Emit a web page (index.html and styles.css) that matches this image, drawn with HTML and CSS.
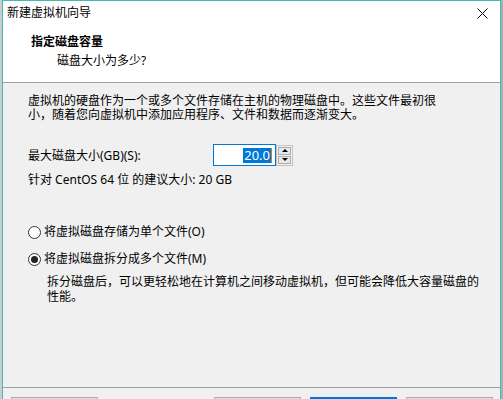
FILE: index.html
```html
<!DOCTYPE html>
<html lang="zh-CN">
<head>
    <meta charset="UTF-8">
    <title>新建虚拟机向导</title>
    <link rel="stylesheet" href="styles.css">
</head>
<body>
    <div class="desktop">
        <div class="edge-left"></div>
        <div class="window">
            <div class="titlebar">
                <span class="title">新建虚拟机向导</span>
                <span class="close">
                    <svg width="11" height="11" viewBox="0 0 11 11">
                        <path d="M0.5 0.5 L10.5 10.5 M10.5 0.5 L0.5 10.5" stroke="#000" stroke-width="1" fill="none"/>
                    </svg>
                </span>
            </div>

            <div class="header">
                <div class="header-title">指定磁盘容量</div>
                <div class="header-sub">磁盘大小为多少?</div>
            </div>

            <div class="content">
                <p class="intro">虚拟机的硬盘作为一个或多个文件存储在主机的物理磁盘中。这些文件最初很<br>小，随着您向虚拟机中添加应用程序、文件和数据而逐渐变大。</p>

                <div class="size-row">
                    <label class="size-label">最大磁盘大小(GB)(S):</label>
                    <div class="spinbox">
                        <div class="spin-input">
                            <span class="selected">20.0</span><span class="caret"></span>
                        </div>
                        <div class="spin-buttons">
                            <div class="spin-btn"><span class="arrow-up"></span></div>
                            <div class="spin-btn"><span class="arrow-down"></span></div>
                        </div>
                    </div>
                </div>

                <div class="hint">针对 CentOS 64 位 的建议大小: 20 GB</div>

                <div class="options">
                    <div class="option">
                        <span class="radio"></span>
                        <span>将虚拟磁盘存储为单个文件(O)</span>
                    </div>
                    <div class="option">
                        <span class="radio checked"></span>
                        <span>将虚拟磁盘拆分成多个文件(M)</span>
                    </div>
                    <p class="option-desc">拆分磁盘后，可以更轻松地在计算机之间移动虚拟机，但可能会降低大容量磁盘的<br>性能。</p>
                </div>
            </div>

            <!-- button labels sit below the visible area -->
            <div class="footer">
                <div class="btn"></div>
                <div class="spacer"></div>
                <div class="btn"></div>
                <div class="btn primary"></div>
                <div class="btn"></div>
            </div>
        </div>
        <div class="edge-right"></div>
    </div>
</body>
</html>
```

FILE: styles.css
```css
body {
    margin: 0;
    padding: 0;
    background-color: #6b6f73;
    font-family: 'Noto Sans', 'Noto Sans CJK SC', sans-serif;
    font-size: 12px;
    color: #000;
    overflow: hidden;
}

.desktop {
    display: flex;
    height: 399px;
    overflow: hidden;
}

.edge-left {
    width: 2px;
    background-color: #c9cdd1;
}

.edge-right {
    flex: 1;
    background-color: #a7b0b8;
}

.window {
    width: 497px;
    height: 420px;
    border: 1px solid #44b9b0;
    background-color: #f0f0f0;
    flex-shrink: 0;
}

.titlebar {
    height: 24px;
    line-height: 24px;
    background-color: #ffffff;
    display: flex;
    justify-content: space-between;
    padding-left: 4px;
}

.close {
    width: 12px;
    display: flex;
    align-items: center;
    margin-right: 11px;
    margin-top: 1px;
}

.header {
    background-color: #ffffff;
    padding: 9px 0 13px 28px;
    border-bottom: 1px solid #a0a0a0;
}

.header-title {
    font-weight: bold;
    line-height: 16px;
}

.header-sub {
    line-height: 16px;
    margin-top: 3px;
    padding-left: 26px;
}

.content {
    height: 304px;
    box-sizing: border-box;
    padding: 11px 0 0 25px;
}

.intro {
    margin: 0;
    line-height: 14px;
}

.size-row {
    display: flex;
    align-items: center;
    margin-top: 22px;
}

.size-label {
    width: 185px;
}

.spinbox {
    display: flex;
    align-items: center;
}

.spin-input {
    width: 58px;
    height: 20px;
    border: 1px solid #0078d7;
    background-color: #ffffff;
    display: flex;
    align-items: center;
    justify-content: flex-end;
    padding-right: 3px;
}

.selected {
    background-color: #0078d7;
    color: #ffffff;
    font-size: 13px;
    line-height: 15px;
    padding: 0 1px;
}

.caret {
    width: 1px;
    height: 15px;
    background-color: #e07a1f;
}

.spin-buttons {
    display: flex;
    flex-direction: column;
    gap: 1px;
    border: 1px solid #c4c4c4;
    padding: 1px;
}

.spin-btn {
    width: 13px;
    height: 8px;
    border: 1px solid #adadad;
    box-sizing: border-box;
    background-color: #e8e8e8;
    display: flex;
    align-items: center;
    justify-content: center;
}

.arrow-up {
    width: 0;
    height: 0;
    border-left: 3px solid transparent;
    border-right: 3px solid transparent;
    border-bottom: 3px solid #000;
}

.arrow-down {
    width: 0;
    height: 0;
    border-left: 3px solid transparent;
    border-right: 3px solid transparent;
    border-top: 3px solid #000;
}

.hint {
    margin-top: 6px;
    line-height: 16px;
}

.options {
    margin-top: 36px;
}

.option {
    display: flex;
    align-items: center;
    line-height: 16px;
    margin-bottom: 11px;
}

.radio {
    width: 11px;
    height: 11px;
    border: 1px solid #333333;
    border-radius: 50%;
    background-color: #ffffff;
    margin-right: 3px;
    display: flex;
    align-items: center;
    justify-content: center;
}

.radio.checked::after {
    content: '';
    width: 7px;
    height: 7px;
    border-radius: 50%;
    background-color: #222222;
}

.option-desc {
    margin: -4px 0 0 19px;
    line-height: 15px;
}

.footer {
    border-top: 1px solid #a0a0a0;
    display: flex;
    gap: 9px;
    padding: 9px 7px 0 8px;
}

.spacer {
    flex: 1;
}

.btn {
    width: 85px;
    height: 21px;
    border: 1px solid #adadad;
    background-color: #e1e1e1;
}

.btn.primary {
    border: 2px solid #0078d7;
    height: 19px;
    width: 83px;
}
```
